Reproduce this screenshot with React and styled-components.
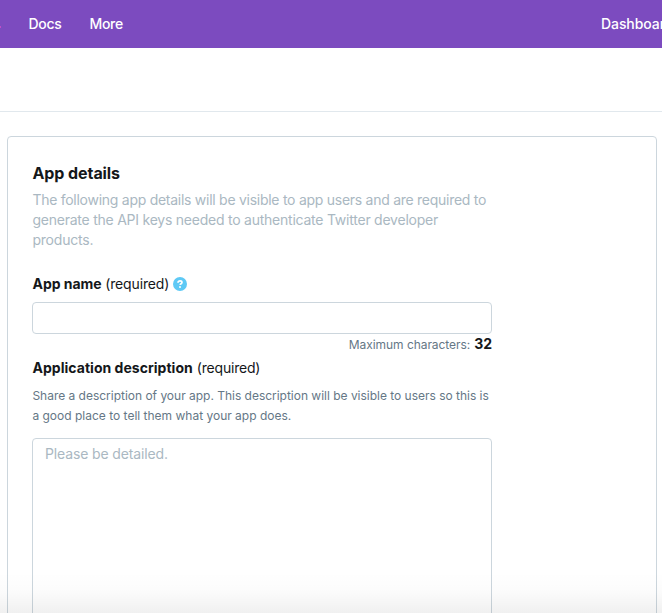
import React from "react";
import styled, { createGlobalStyle } from "styled-components";

const GlobalStyle = createGlobalStyle`
  *, *::before, *::after { box-sizing: border-box; }
  html, body { margin: 0; height: 100%; overflow: hidden; background: #fff; }
  body { font-family: Inter, "Liberation Sans", sans-serif; font-size: 14px; line-height: 20px; color: #14171a; }
`;

const Page = styled.div`
  height: 613px;
  width: 662px;
  overflow: hidden;
  display: flex;
  flex-direction: column;
  position: relative;
`;

const NavBar = styled.nav`
  flex: none;
  height: 48px;
  display: flex;
  align-items: center;
  justify-content: space-between;
  background: #7c4bbf;
`;

const NavMark = styled.span`
  align-self: center;
  flex: none;
  width: 1px;
  height: 2px;
  margin: 5px -0.6px 0 0;
  background: #c04fc8;
`;

const NavGroup = styled.div`
  display: flex;
  gap: 28px;
  width: ${(p) => p.$width || "auto"};
`;

const NavLink = styled.a`
  color: #fff;
  font-size: 14px;
  font-weight: 500;
  white-space: nowrap;
  letter-spacing: ${(p) => p.$tracking || "0"};
`;

const SubHeader = styled.div`
  flex: none;
  height: 64px;
  border-bottom: 1px solid #e1e8ed;
`;

const Card = styled.main`
  flex: none;
  height: 560px;
  margin: 24px 5px 0 7px;
  padding: 26px 24px 0;
  border: 1px solid #ccd6dd;
  border-radius: 4px;
`;

const Form = styled.form`
  width: 460px;
  display: flex;
  flex-direction: column;
`;

const Title = styled.h2`
  margin: 0 0 7px;
  padding-left: 0.5px;
  font-size: 16px;
  line-height: 20px;
  font-weight: 700;
  white-space: nowrap;
  letter-spacing: ${(p) => p.$tracking || "0"};
`;

const Line = styled.span`
  display: block;
  padding-left: 0.4px;
  white-space: nowrap;
  letter-spacing: ${(p) => p.$tracking || "0"};
`;

const Intro = styled.p`
  margin: 0 0 24px;
  color: #aab8c2;
`;

const Label = styled.label`
  display: flex;
  align-items: center;
  height: 20px;
  padding-left: 0.5px;
  gap: ${(p) => p.$gap || "4px"};
  white-space: nowrap;
`;

const Strong = styled.strong`
  font-weight: 700;
  letter-spacing: ${(p) => p.$tracking || "0"};
`;

const Required = styled.span`
  letter-spacing: ${(p) => p.$tracking || "0"};
`;

const HelpIcon = styled.svg`
  width: 14px;
  height: 14px;
`;

const Input = styled.input`
  height: 32px;
  margin: 8px 0 0;
  border: 1px solid #ccd6dd;
  border-radius: 4px;
  background: #fff;
`;

const Counter = styled.div`
  display: flex;
  justify-content: flex-end;
  align-items: baseline;
  gap: 4px;
  height: 24px;
  font-size: 12px;
  color: #657786;
`;

const CountText = styled.span`
  letter-spacing: ${(p) => p.$tracking || "0"};
`;

const Count = styled.strong`
  color: #14171a;
  font-size: 14px;
  font-weight: 700;
`;

const Hint = styled.p`
  margin: 8px 0 12px;
  font-size: 12px;
  color: #657786;
`;

const TextArea = styled.textarea`
  height: 240px;
  padding: 5px 12px;
  border: 1px solid #ccd6dd;
  border-radius: 4px;
  resize: none;
  background: #fff;
  font: inherit;
  letter-spacing: ${(p) => p.$tracking || "0"};
  &::placeholder { color: #aab8c2; opacity: 1; }
`;

const BottomShade = styled.div`
  position: absolute;
  left: 0;
  right: 0;
  bottom: 0;
  height: 41px;
  pointer-events: none;
  background: linear-gradient(to bottom, rgba(0, 0, 0, 0), rgba(0, 0, 0, 0.016) 50%, rgba(0, 0, 0, 0.06));
`;

export default function App() {
  return (
    <>
      <GlobalStyle />
      <Page>
        <NavBar>
          <NavGroup>
            <NavMark />
            <NavLink $tracking="-0.28px">Docs</NavLink>
            <NavLink $tracking="-0.3px">More</NavLink>
          </NavGroup>
          <NavGroup $width="61px">
            <NavLink $tracking="-0.08px">Dashboard</NavLink>
          </NavGroup>
        </NavBar>
        <SubHeader />
        <Card>
          <Form>
            <Title $tracking="-0.08px">App details</Title>
            <Intro>
              <Line $tracking="-0.268px">The following app details will be visible to app users and are required to</Line>
              <Line $tracking="-0.235px">generate the API keys needed to authenticate Twitter developer</Line>
              <Line $tracking="-0.2px">products.</Line>
            </Intro>
            <Label htmlFor="app-name" $gap="3.6px">
              <Strong $tracking="-0.03px">App name</Strong>
              <Required $tracking="-0.15px">(required)</Required>
              <HelpIcon viewBox="0 0 14 14" aria-hidden="true">
                <circle cx="7" cy="7" r="7" fill="#5ec9f5" />
                <path d="M5 5.7C5 4.5 5.9 3.9 7 3.9s2 .6 2 1.6c0 1.2-1.6 1.2-1.9 2.4" fill="none" stroke="#fff" strokeWidth="1.7" />
                <circle cx="7" cy="9.9" r="1" fill="#fff" />
              </HelpIcon>
            </Label>
            <Input id="app-name" />
            <Counter>
              <CountText $tracking="-0.06px">Maximum characters:</CountText>
              <Count>32</Count>
            </Counter>
            <Label htmlFor="app-description">
              <Strong $tracking="0.03px">Application description</Strong>
              <Required $tracking="-0.2px">(required)</Required>
            </Label>
            <Hint>
              <Line $tracking="-0.015px">Share a description of your app. This description will be visible to users so this is</Line>
              <Line>a good place to tell them what your app does.</Line>
            </Hint>
            <TextArea id="app-description" placeholder="Please be detailed." $tracking="-0.14px" />
          </Form>
        </Card>
        <BottomShade />
      </Page>
    </>
  );
}
